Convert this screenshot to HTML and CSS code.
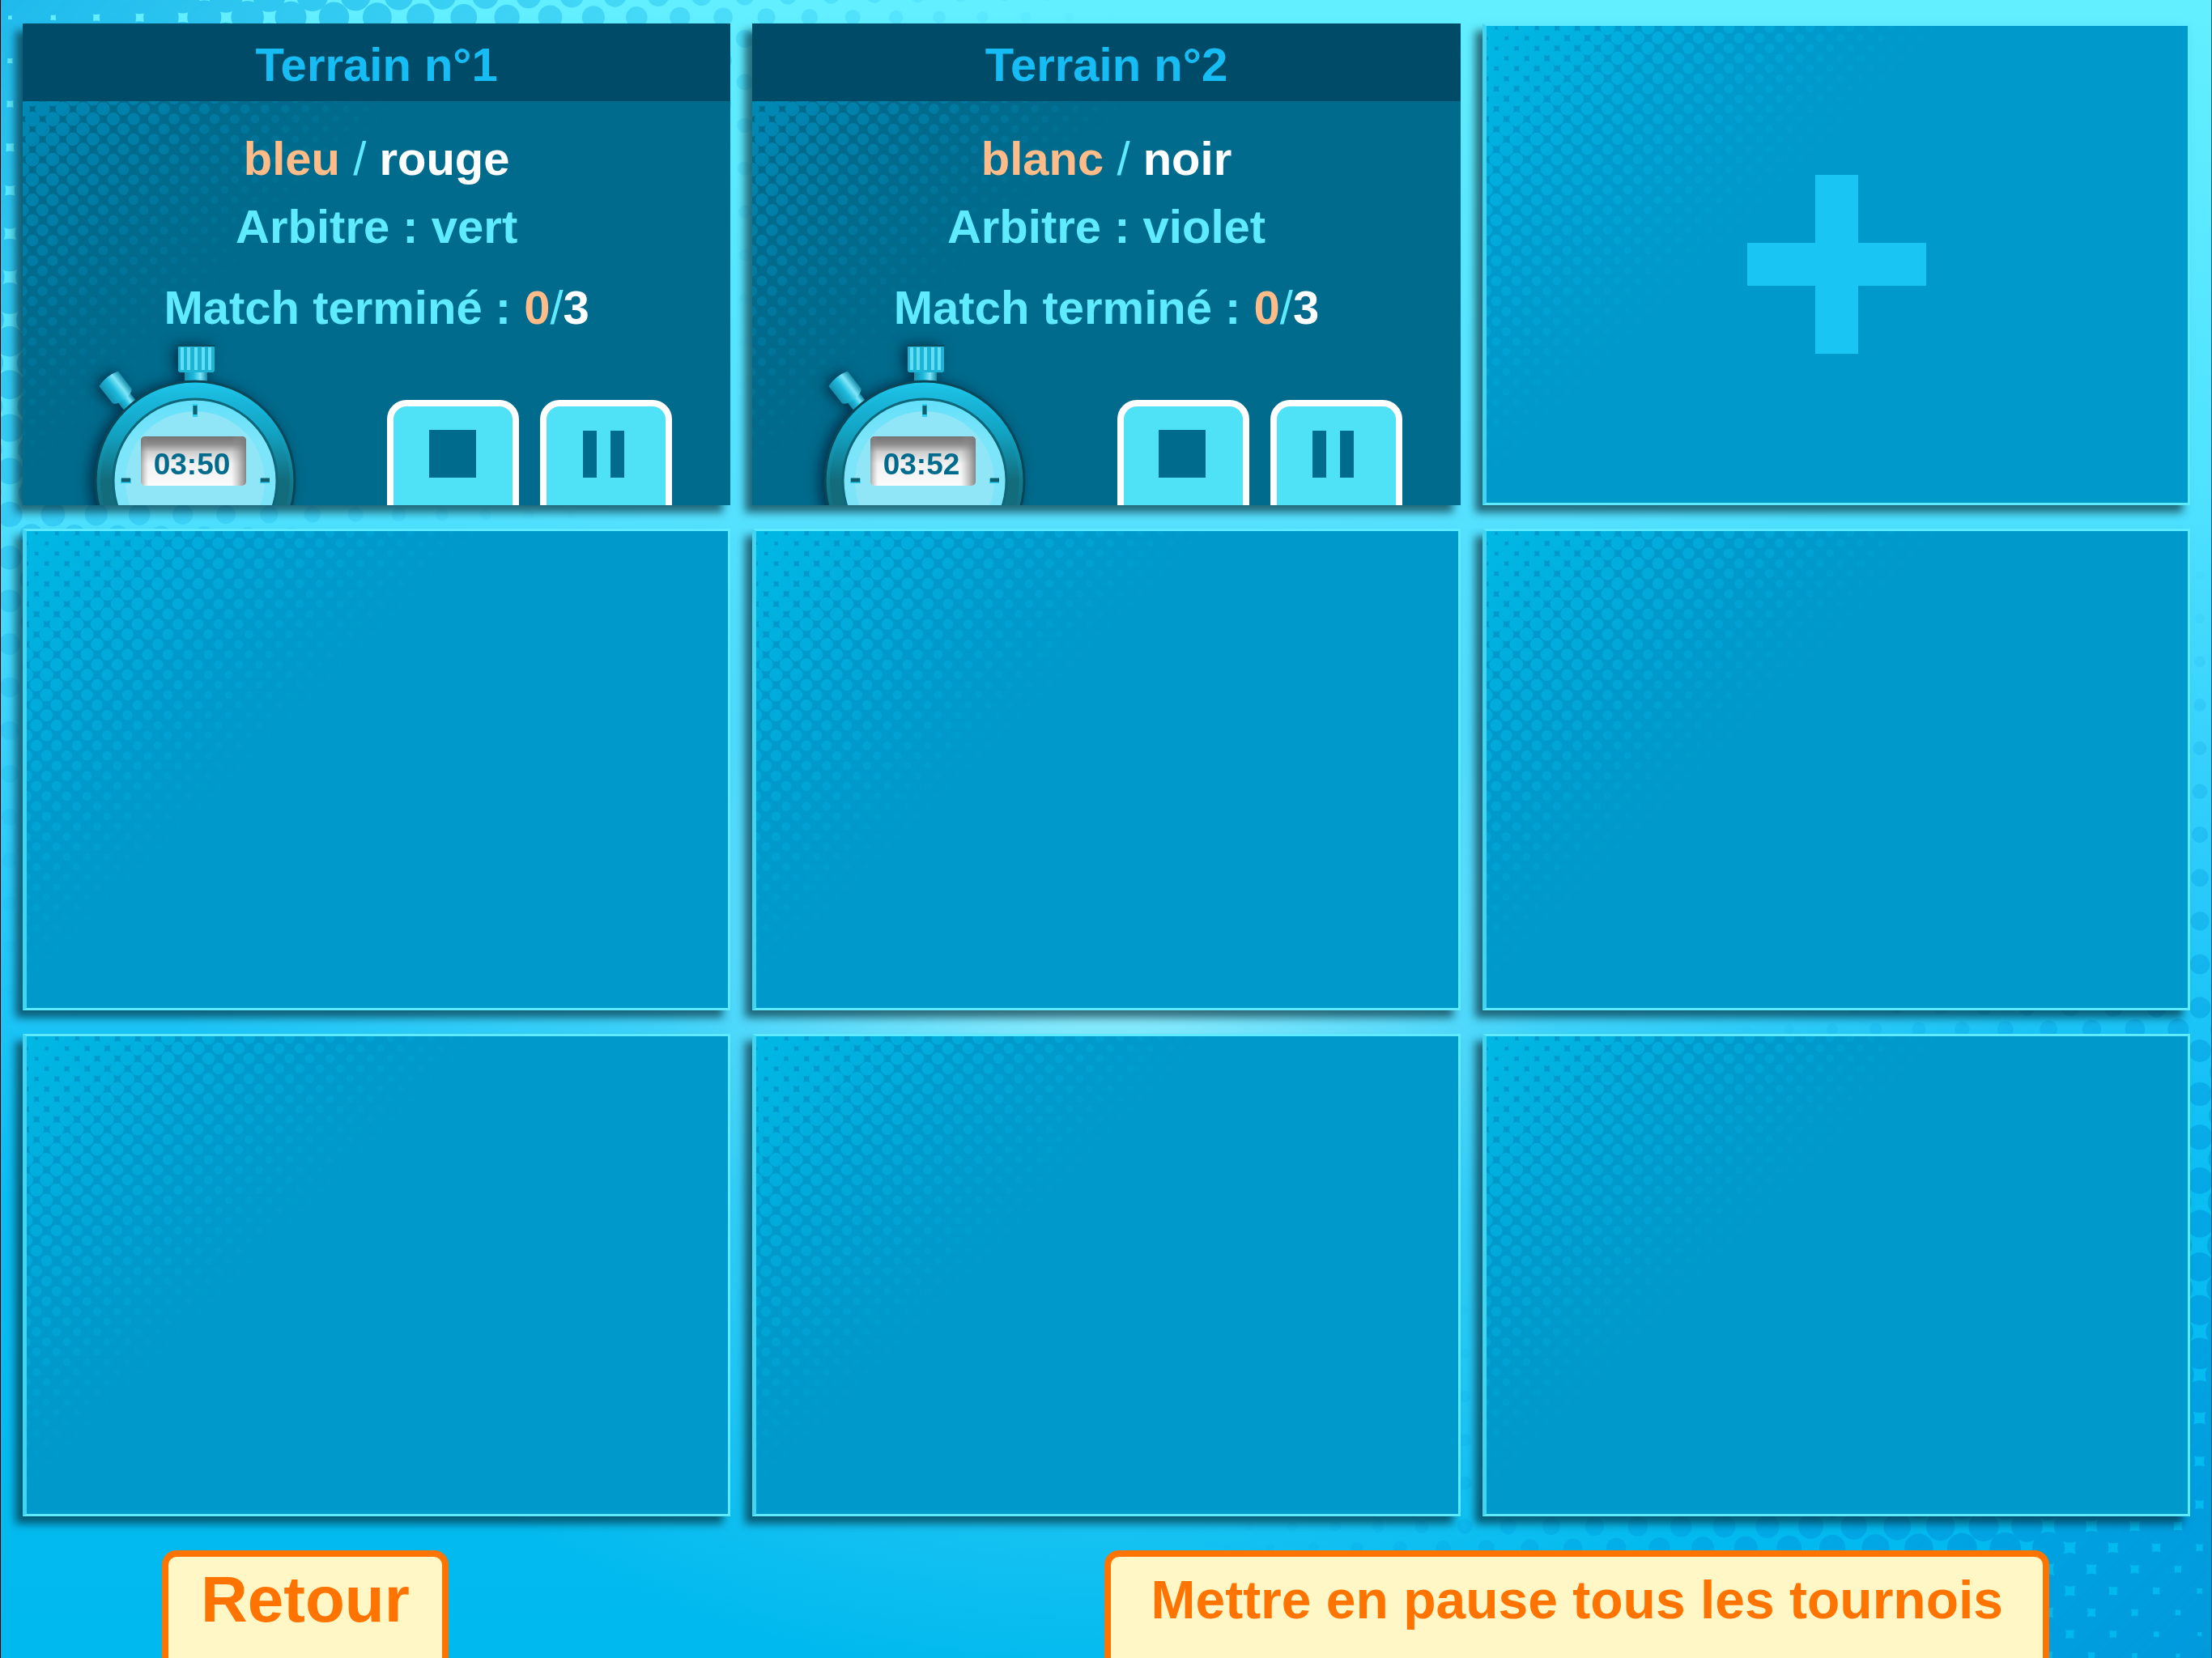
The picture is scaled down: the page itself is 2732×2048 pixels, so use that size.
FILE: index.html
```html
<!DOCTYPE html>
<html lang="fr">
<head>
    <meta charset="UTF-8">
    <meta name="viewport" content="width=device-width, initial-scale=1.0">
    <title>Tournois</title>
    <link rel="stylesheet" href="styles.css">
</head>
<body>
    <canvas class="page-dots" id="pageDots"></canvas>

    <!-- stopwatch drawing shared by the cards -->
    <svg class="defs" width="0" height="0" aria-hidden="true">
        <defs>
            <linearGradient id="ring" x1="0" y1="0" x2="0" y2="1">
                <stop offset="0" stop-color="#1fc6ea"/>
                <stop offset="0.2" stop-color="#12add0"/>
                <stop offset="0.5" stop-color="#127a8c"/>
                <stop offset="1" stop-color="#125a68"/>
            </linearGradient>
            <linearGradient id="innerRing" x1="0" y1="0" x2="0" y2="1">
                <stop offset="0" stop-color="#1cc0e5"/>
                <stop offset="0.25" stop-color="#12a2c2"/>
                <stop offset="0.5" stop-color="#126c7c"/>
            </linearGradient>
            <linearGradient id="neck" x1="0" y1="0" x2="1" y2="0">
                <stop offset="0" stop-color="#1491ae"/>
                <stop offset="0.4" stop-color="#1cb9dc"/>
                <stop offset="0.7" stop-color="#7fe6fa"/>
                <stop offset="1" stop-color="#128ba8"/>
            </linearGradient>
            <linearGradient id="face" x1="0" y1="0" x2="0" y2="1">
                <stop offset="0" stop-color="#62dffa"/>
                <stop offset="0.25" stop-color="#7be5f9"/>
                <stop offset="1" stop-color="#7fe4f8"/>
            </linearGradient>
            <linearGradient id="screen" x1="0" y1="0" x2="0" y2="1">
                <stop offset="0" stop-color="#747474"/>
                <stop offset="0.16" stop-color="#8c8c8c"/>
                <stop offset="0.32" stop-color="#cfcfcf"/>
                <stop offset="0.55" stop-color="#f1f1f1"/>
                <stop offset="1" stop-color="#fbfbfb"/>
            </linearGradient>
            <linearGradient id="screenSide" x1="0" y1="0" x2="1" y2="0">
                <stop offset="0" stop-color="#777" stop-opacity="0.6"/>
                <stop offset="0.07" stop-color="#999" stop-opacity="0"/>
                <stop offset="0.86" stop-color="#999" stop-opacity="0"/>
                <stop offset="1" stop-color="#777" stop-opacity="0.9"/>
            </linearGradient>
            <symbol id="watch" viewBox="0 0 270 300">
                <g transform="translate(57 75) rotate(-38)">
                    <rect x="-9" y="-14" width="19" height="20" fill="url(#neck)"/>
                    <path d="M-15 -37Q0 -42 15 -37V-10Q12 -5 0 -5Q-12 -5 -15 -10Z" fill="url(#neck)"/>
                </g>
                <rect x="128" y="34" width="28" height="18" fill="url(#neck)"/>
                <rect x="120" y="5" width="45" height="33" rx="3" fill="#1db4d6"/>
                <path d="M120 5H165" stroke="#0c4a5c" stroke-width="2"/>
                <path d="M125 7V35M133 7V35M142 7V35M151 7V35M159 7V35" stroke="#62dff5" stroke-width="4"/>
                <circle cx="141" cy="172" r="123" fill="url(#ring)" stroke="#0b4658" stroke-width="3"/>
                <circle cx="141" cy="172" r="117" fill="url(#innerRing)"/>
                <circle cx="141" cy="172" r="101" fill="url(#face)" stroke="#0f6678" stroke-width="3"/>
                <circle cx="141" cy="172" r="86" fill="#90e5f6"/>
                <path d="M141 77V93M49 172H62M221 172H233" stroke="#2bd0f3" stroke-width="6"/>
                <path d="M141 79V90M50 171H61M222 171H233" stroke="#10606f" stroke-width="5"/>
                <rect x="74" y="117" width="130" height="61" rx="5" fill="url(#screen)"/>
                <rect x="74" y="117" width="130" height="61" rx="5" fill="url(#screenSide)"/>
            </symbol>
        </defs>
    </svg>

    <main class="board">
        <section class="card match">
            <h2>Terrain n°1</h2>
            <div class="match-info">
                <p><span class="team-a">bleu</span> <span class="slash">/</span> <span class="team-b">rouge</span></p>
                <p>Arbitre : vert</p>
                <p class="score">Match terminé : <span class="team-a">0</span><span class="slash">/</span><span class="team-b">3</span></p>
            </div>
            <div class="match-controls">
                <svg class="watch" viewBox="0 0 270 300">
                    <use href="#watch"/>
                    <text x="137" y="164" text-anchor="middle">03:50</text>
                </svg>
                <div class="buttons">
                    <button type="button" aria-label="Arrêter"><svg viewBox="0 0 58 59"><path d="M0 0H58V59H0Z"/></svg></button>
                    <button type="button" aria-label="Pause"><svg viewBox="0 0 58 59"><path d="M1 1H18V59H1ZM35 1H52V59H35Z"/></svg></button>
                </div>
            </div>
        </section>
        <section class="card match">
            <h2>Terrain n°2</h2>
            <div class="match-info">
                <p><span class="team-a">blanc</span> <span class="slash">/</span> <span class="team-b">noir</span></p>
                <p>Arbitre : violet</p>
                <p class="score">Match terminé : <span class="team-a">0</span><span class="slash">/</span><span class="team-b">3</span></p>
            </div>
            <div class="match-controls">
                <svg class="watch" viewBox="0 0 270 300">
                    <use href="#watch"/>
                    <text x="137" y="164" text-anchor="middle">03:52</text>
                </svg>
                <div class="buttons">
                    <button type="button" aria-label="Arrêter"><svg viewBox="0 0 58 59"><path d="M0 0H58V59H0Z"/></svg></button>
                    <button type="button" aria-label="Pause"><svg viewBox="0 0 58 59"><path d="M1 1H18V59H1ZM35 1H52V59H35Z"/></svg></button>
                </div>
            </div>
        </section>
        <button type="button" class="card empty add" aria-label="Ajouter un terrain">
            <svg viewBox="0 0 221 221"><path d="M84 0H137V84H221V137H137V221H84V137H0V84H84Z"/></svg>
        </button>
        <div class="card empty"></div>
        <div class="card empty"></div>
        <div class="card empty"></div>
        <div class="card empty"></div>
        <div class="card empty"></div>
        <div class="card empty"></div>
    </main>

    <footer class="actions">
        <button type="button" class="back">Retour</button>
        <button type="button" class="pause-all">Mettre en pause tous les tournois</button>
    </footer>

    <script src="script.js"></script>
</body>
</html>
```
FILE: styles.css
```css
* {
    box-sizing: border-box;
}
body {
    margin: 0;
    height: 100vh;
    overflow: hidden;
    border-left: 1px solid #000;
    border-right: 1px solid #14627f;
    font-family: Arial, "Liberation Sans", sans-serif;
    font-weight: bold;
    background:
        radial-gradient(1150px 900px at 50% 58%, rgba(160, 243, 255, 0.9), rgba(110, 230, 255, 0.4) 50%, rgba(90, 225, 255, 0)),
        linear-gradient(180deg, #62efff 0%, #4fe1ff 30%, #2bcbfb 52%, #0abdf3 72%, #00b9ee 100%);
}
button {
    font: inherit;
    margin: 0;
    cursor: pointer;
}
.defs {
    position: absolute;
}
.page-dots {
    position: fixed;
    top: 0;
    left: 0;
    z-index: -1;
}
.board {
    display: grid;
    grid-template-columns: repeat(3, 1fr);
    align-items: start;
    gap: 29px 27px;
    padding: 29px 26px 0 27px;
}
.card {
    position: relative;
    width: 100%;
    aspect-ratio: 874 / 595;
    overflow: hidden;
    padding: 0;
    box-shadow: -9px 9px 10px rgba(0, 30, 40, 0.62);
}
.card-dots {
    position: absolute;
    top: 0;
    left: 0;
}
.empty {
    border: 3px solid #5eebff;
    border-left: 5px solid #41d5f2;
    background: #0099cc;
}
.add {
    display: flex;
    align-items: center;
    justify-content: center;
}
.add svg {
    position: relative;
    width: 221px;
    fill: #19c5f3;
}

/* cards with a running match */
.match {
    background: #006b8c;
    color: #5eebff;
    font-size: 58px;
    text-align: center;
}
.match h2 {
    position: relative;
    margin: 0;
    padding: 8px 0 2px;
    font-size: 58px;
    line-height: 86px;
    color: #16bdf5;
    background: #004c68;
}
.match-info {
    position: relative;
    padding-top: 29px;
}
.match-info p {
    margin: 0;
    line-height: 84px;
}
.match-info .score {
    margin-top: 16px;
}
.team-a {
    color: #ffbb88;
}
.team-b {
    color: #fff;
}
.slash {
    font-weight: normal;
}
.match-controls {
    position: relative;
    display: flex;
    justify-content: space-between;
    align-items: flex-start;
    padding: 0 72px;
}
.watch {
    width: 270px;
    height: 300px;
    overflow: visible;
    filter: drop-shadow(-6px 0 8px rgba(0, 25, 50, 0.7));
}
.watch text {
    font-size: 37px;
    fill: #006b8c;
}
.buttons {
    display: flex;
    gap: 26px;
    padding-top: 72px;
}
.buttons button {
    display: flex;
    justify-content: center;
    align-items: flex-start;
    width: 163px;
    height: 163px;
    padding: 29px 2px 0 0;
    border: 8px solid #fff;
    border-radius: 24px;
    background: #4fe1f5;
}
.buttons svg {
    width: 58px;
    height: 59px;
    fill: #006b8c;
}

/* bottom actions */
.actions {
    display: flex;
    justify-content: space-between;
    align-items: flex-start;
    padding: 42px 200px 0 199px;
}
.actions button {
    border: 8px solid #ff7300;
    border-radius: 18px;
    line-height: 106px;
    color: #ff7300;
    background: #fff8c6;
}
.actions .back {
    padding: 0 40px 40px;
    font-size: 80px;
}
.actions .pause-all {
    padding: 0 49px 40px;
    font-size: 66px;
}
```
FILE: script.js
```js
// fills one half of a staggered dot grid
function dotGrid(ctx, w, h, x0, y0, pitch, radius) {
    for (let y = y0 - pitch; y < h + pitch; y += pitch) {
        for (let x = x0 - pitch; x < w + pitch; x += pitch) {
            const r = radius(x, y);
            if (r > 0) {
                ctx.beginPath();
                ctx.arc(x, y, r, 0, Math.PI * 2);
                ctx.fill();
            }
        }
    }
}

function drawCard(card) {
    const canvas = document.createElement('canvas');
    const w = canvas.width = card.clientWidth;
    const h = canvas.height = card.clientHeight;
    const reach = 590;
    const top = card.classList.contains('match') ? 3 : 0;
    canvas.className = 'card-dots';
    card.prepend(canvas);

    const ctx = canvas.getContext('2d');
    const radius = (x, y) => {
        const t = (x + y) / reach;
        return t < 1 ? 11 - 8 * t : 0;
    };
    ctx.fillStyle = top ? '#0090bf' : '#00b8e5';
    dotGrid(ctx, w, h, 12, top + 15, 25, radius);
    dotGrid(ctx, w, h, 24.5, top + 2.5, 25, radius);

    // fade out along the diagonal
    const fade = ctx.createLinearGradient(0, 0, reach / 2, reach / 2);
    fade.addColorStop(0, 'rgba(0,0,0,1)');
    fade.addColorStop(1, 'rgba(0,0,0,0)');
    ctx.globalCompositeOperation = 'destination-in';
    ctx.fillStyle = fade;
    ctx.fillRect(0, 0, w, h);
}

function drawPage() {
    const canvas = document.getElementById('pageDots');
    const w = canvas.width = window.innerWidth;
    const h = canvas.height = window.innerHeight;
    const ctx = canvas.getContext('2d');
    const pitch = 53.4;
    const reach = 1400;
    const size = d => d < reach ? 25 - 14.5 * d / 1000 : 0;

    // top left corner
    const first = (x, y) => size(x + y);
    ctx.fillStyle = '#1fbaec';
    dotGrid(ctx, w, h, 12, 48, pitch, first);
    dotGrid(ctx, w, h, 38.7, 21.3, pitch, first);

    // bottom right corner
    const last = (x, y) => size(w - x + h - y);
    const x0 = (w - 15) % pitch;
    const y0 = (h - 216) % pitch;
    ctx.fillStyle = '#0099dc';
    dotGrid(ctx, w, h, x0, y0, pitch, last);
    dotGrid(ctx, w, h, x0 - pitch / 2, y0 + pitch / 2, pitch, last);

    const half = (w + h) / 2;
    const stop = reach / (w + h);
    const fade = ctx.createLinearGradient(0, 0, half, half);
    fade.addColorStop(0, 'rgba(0,0,0,1)');
    fade.addColorStop(stop, 'rgba(0,0,0,0)');
    fade.addColorStop(1 - stop, 'rgba(0,0,0,0)');
    fade.addColorStop(1, 'rgba(0,0,0,1)');
    ctx.globalCompositeOperation = 'destination-in';
    ctx.fillStyle = fade;
    ctx.fillRect(0, 0, w, h);
}

drawPage();
document.querySelectorAll('.card').forEach(drawCard);
```
